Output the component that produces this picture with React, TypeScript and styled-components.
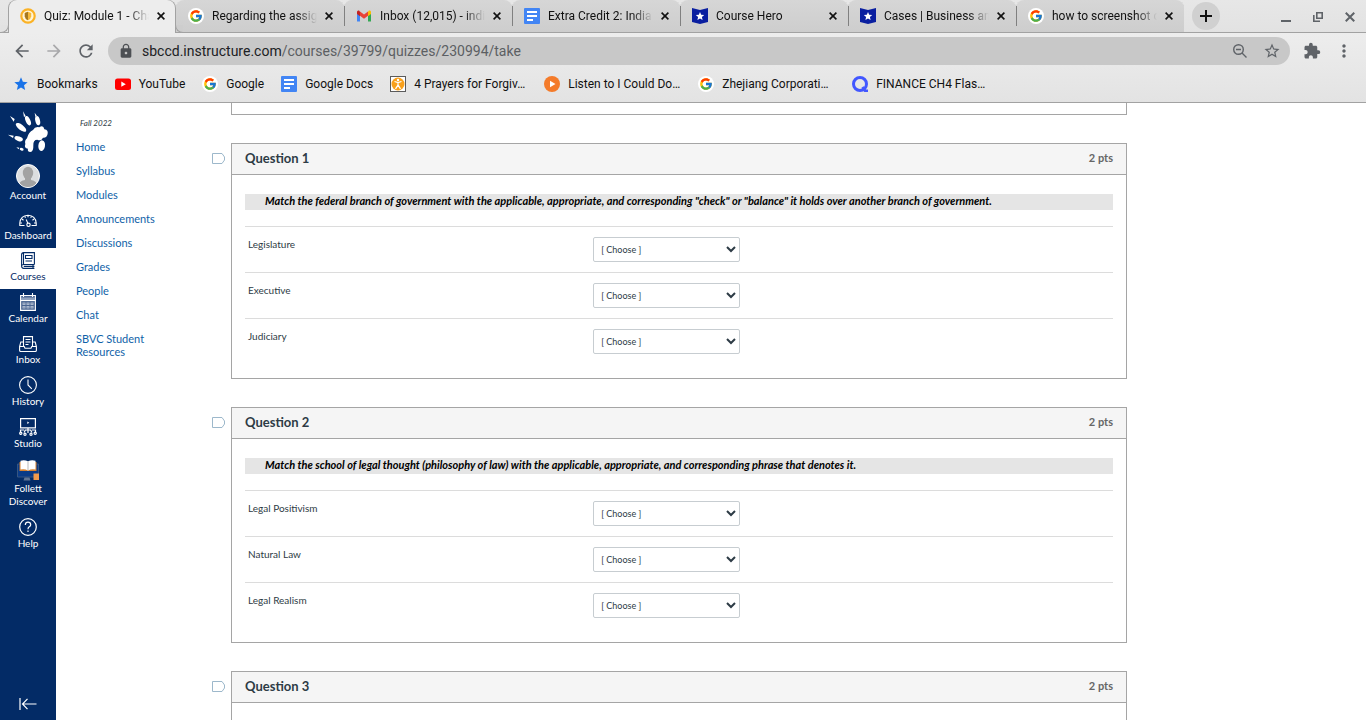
import React from 'react';
import styled, { createGlobalStyle, css } from 'styled-components';
import { FcGoogle } from 'react-icons/fc';
import {
  MdArrowBack,
  MdArrowForward,
  MdExtension,
  MdLock,
  MdMoreVert,
  MdRefresh,
  MdStar,
  MdStarBorder,
} from 'react-icons/md';

const line = '#a2a2a2';
const navy = '#032b66';

const GlobalStyle = createGlobalStyle`
  *, *::before, *::after { box-sizing: border-box; }
  body { margin: 0; background: #fff; }
  button { border: 0; padding: 0; background: none; font: inherit; color: inherit; cursor: pointer; }
  a { text-decoration: none; }
  svg { display: block; flex: none; }
`;

const Window = styled.div`
  display: flex;
  flex-direction: column;
  height: 100vh;
  overflow: hidden;
`;

/* ---------- browser frame ---------- */

const Chrome = styled.header`
  flex: none;
  font-family: Roboto, 'Noto Sans', sans-serif;
  font-size: 12px;
  color: #111;
  border-bottom: 1px solid ${line};
`;

const TabStrip = styled.div`
  display: flex;
  height: 33px;
  padding-left: 8px;
  background: linear-gradient(#e7e7e7, #e2e2e2);
  box-shadow: inset 0 -1px ${line};
`;

const flare = css`
  content: '';
  position: absolute;
  bottom: 0;
  width: 8px;
  height: 8px;
`;

const Tab = styled.div<{ $active?: boolean }>`
  position: relative;
  display: flex;
  align-items: center;
  flex: 0 1 168px;
  min-width: 0;
  padding: 0 7px 1px 12px;
  border-radius: 8px 8px 0 0;
  background: linear-gradient(#d6d6d6, #cdcdcd);
  box-shadow: inset 0 -1px ${line};

  & + &::before {
    content: '';
    position: absolute;
    left: 0;
    top: 6px;
    width: 1px;
    height: 20px;
    background: #808080;
  }

  &:last-of-type::after {
    ${flare}
    right: -8px;
    background: radial-gradient(circle at 8px 0, transparent 7px, #cdcdcd 8px);
    box-shadow: inset 0 -1px ${line};
  }

  ${(p) =>
    p.$active &&
    css`
      z-index: 1;
      background: #ededed;
      box-shadow: inset 1px 0 ${line}, inset -1px 0 ${line};

      &::before {
        ${flare}
        left: -7px;
        border: solid ${line};
        border-width: 0 1px 1px 0;
        border-radius: 0 0 8px 0;
        background: #e2e2e2;
      }

      &::after {
        ${flare}
        right: -7px;
        border: solid ${line};
        border-width: 0 0 1px 1px;
        border-radius: 0 0 0 8px;
        background: #cdcdcd;
      }

      & + div::before {
        display: none;
      }
    `}
`;

const TabTitle = styled.button`
  flex: 1;
  min-width: 0;
  margin-left: 8px;
  overflow: hidden;
  white-space: nowrap;
  text-align: left;
  line-height: 16px;
  mask-image: linear-gradient(to right, #000 80%, transparent);
`;

const CloseTab = styled.button`
  display: grid;
  place-items: center;
  width: 16px;
  height: 16px;
  margin-left: 4px;
`;

const NewTab = styled.button`
  display: grid;
  place-items: center;
  width: 28px;
  height: 28px;
  margin: 2px 0 0 8px;
  border-radius: 50%;
  background: #d0d0d0;
`;

const WindowControls = styled.div`
  display: flex;
  align-items: center;
  margin-left: auto;
`;

const WindowButton = styled.button`
  display: grid;
  place-items: center;
  width: 32px;
  height: 32px;
  color: #5f6368;
`;

const ChromeBody = styled.div`
  background: linear-gradient(#ededed, #e3e3e3);
`;

const Toolbar = styled.div`
  display: flex;
  align-items: center;
  padding: 4px 6px;
`;

const ToolButton = styled.button<{ $dim?: boolean }>`
  display: grid;
  place-items: center;
  width: 32px;
  height: 28px;
  color: ${(p) => (p.$dim ? '#a8a8aa' : '#5f6368')};
`;

const Omnibox = styled.div`
  display: flex;
  align-items: center;
  flex: 1;
  min-width: 0;
  height: 28px;
  margin: 0 6px;
  padding: 0 2px 0 10px;
  border-radius: 14px;
  background: #c8c8c8;
  color: #5f6368;
  font-size: 14px;
`;

const Host = styled.label`
  margin-left: 8px;
  color: #202124;
`;

const PathInput = styled.input`
  flex: 1;
  min-width: 0;
  padding: 0;
  border: 0;
  outline: 0;
  background: none;
  font: inherit;
  color: #5c5f63;
`;

const Bookmarks = styled.nav`
  display: flex;
  align-items: center;
  gap: 17px;
  height: 33px;
  padding: 0 13px 3px;
`;

const Bookmark = styled.a<{ $long: boolean }>`
  display: flex;
  align-items: center;
  gap: 8px;
  min-width: ${(p) => (p.$long ? '137px' : '0')};
  color: #111;
  white-space: nowrap;
  line-height: 16px;
`;

const Disc = styled.span`
  display: grid;
  place-items: center;
  flex: none;
  width: 16px;
  height: 16px;
  border-radius: 50%;
  background: #fff;
`;

/* ---------- page ---------- */

const Page = styled.div`
  display: flex;
  flex: 1;
  min-height: 0;
  font-family: Lato, 'Open Sans', sans-serif;
  color: #2d3b45;
`;

const GlobalNav = styled.nav`
  display: flex;
  flex-direction: column;
  flex: none;
  width: 56px;
  background: ${navy};
`;

const Logo = styled.a`
  display: grid;
  place-items: center;
  height: 57px;
`;

const NavItem = styled.a<{ $active?: boolean }>`
  display: flex;
  flex-direction: column;
  align-items: center;
  gap: 1px;
  padding: 4px 0 6px;
  font-size: 10px;
  line-height: 13px;
  text-align: center;
  color: ${(p) => (p.$active ? navy : '#fff')};
  background: ${(p) => (p.$active ? '#fff' : 'transparent')};
`;

const Collapse = styled.button`
  display: grid;
  place-items: center;
  height: 32px;
  margin-top: auto;
  color: #fff;
`;

const CourseNav = styled.nav`
  flex: none;
  width: 156px;
  padding: 14px 50px 0 20px;
`;

const Term = styled.p`
  margin: 0 0 11px;
  padding-left: 4px;
  font-size: 8px;
  line-height: 12px;
  font-style: italic;
`;

const CourseList = styled.ul`
  display: flex;
  flex-direction: column;
  gap: 11px;
  margin: 0;
  padding: 0;
  list-style: none;
`;

const CourseLink = styled.a`
  display: block;
  font-size: 11px;
  line-height: 13px;
  color: #0f62a8;
`;

const Quiz = styled.main`
  display: flex;
  flex-direction: column;
  gap: 28px;
  flex: 1;
  min-width: 0;
  padding-right: 239px;
  overflow: auto;
  scrollbar-width: none;
`;

const PreviousPanel = styled.section`
  flex: none;
  height: 12px;
  margin-left: 19px;
  border: 1px solid #a5a5a5;
  border-top: 0;
`;

const QuestionRow = styled.div`
  display: flex;
  align-items: flex-start;
  gap: 6px;
`;

const FlagButton = styled.button`
  margin-top: 10px;
`;

const Card = styled.section`
  flex: 1;
  min-width: 0;
  border: 1px solid #a5a5a5;
`;

const CardHeader = styled.header`
  display: flex;
  align-items: center;
  justify-content: space-between;
  height: 31px;
  padding: 0 13px 2px;
  border-bottom: 1px solid #a5a5a5;
  background: #f5f5f5;
`;

const CardTitle = styled.h2`
  margin: 0;
  font-size: 13px;
  line-height: 16px;
  font-weight: 700;
`;

const Points = styled.span`
  font-size: 11px;
  line-height: 16px;
  font-weight: 700;
  color: #666;
`;

const CardBody = styled.div`
  padding: 19px 13px 14px;
`;

const Prompt = styled.p`
  margin: 0 0 16px;
  padding: 0 20px 2px;
  font-size: 11px;
  line-height: 14px;
  font-weight: 700;
  font-style: italic;
  color: #000;
  background: #e5e5e5;
`;

const Answer = styled.div`
  display: flex;
  align-items: flex-start;
  gap: 1px;
  padding: 10px 0;
  border-top: 1px solid #dcdcdc;
`;

const AnswerLabel = styled.label`
  flex: 0 0 40%;
  padding-left: 3px;
  font-size: 10px;
  line-height: 14px;
`;

const AnswerSelect = styled.select`
  width: 147px;
  height: 25px;
  padding: 0 0 0 3px;
  border: 1px solid #c7cdd1;
  border-radius: 2px;
  background-color: #fff;
  font-family: inherit;
  font-size: 9px;
  color: #2d3b45;
`;

/* ---------- drawings ---------- */

const GoogleIcon = () => (
  <Disc>
    <FcGoogle size={14} />
  </Disc>
);

const DocsIcon = () => (
  <svg width="16" height="16" viewBox="0 0 16 16">
    <rect width="16" height="16" rx="1" fill="#4285f4" />
    <path d="M3 3h10v2H3zM3 7h10v2H3zM3 11h6v2H3z" fill="#fff" />
  </svg>
);

const GmailIcon = () => (
  <svg width="16" height="16" viewBox="0 0 16 16">
    <path d="M1 4v9.500h3V7z" fill="#4285f4" />
    <path d="M15 4v9.500h-3V7z" fill="#34a853" />
    <path d="M12 3.500 13 2.600Q15 2 15 4v2l-3 2.300z" fill="#fbbc04" />
    <path d="M4 3.500 3 2.600Q1 2 1 4v2l3 2.300z" fill="#c5221f" />
    <path d="M4 3.500v4.300l4 3 4-3V3.500l-4 3z" fill="#ea4335" />
  </svg>
);

const HeroIcon = () => (
  <svg width="16" height="16" viewBox="0 0 16 16">
    <path d="M0 0 8 2l8-2v14l-8 2-8-2z" fill="#0a1fa0" />
    <path d="m8 4 1.200 2.800 3 .2-2.300 2 .7 3L8 10.400 5.400 12l.7-3-2.300-2 3-.2z" fill="#fff" />
  </svg>
);

const QuizIcon = () => (
  <svg width="16" height="16" viewBox="0 0 16 16">
    <circle cx="8" cy="8" r="6.700" fill="#fff4d6" stroke="#fbb225" strokeWidth="2.200" />
    <path d="M8 3.800 11.200 5v3.200Q11 10.700 8 12.200 5 10.700 4.800 8.200V5z" fill="#f5b93a" />
    <path d="M8 3.800v8.400Q5 10.700 4.800 8.200V5z" fill="#a5781f" />
  </svg>
);

const YouTubeIcon = () => (
  <svg width="16" height="16" viewBox="0 0 16 16">
    <rect y="2.500" width="16" height="11.500" rx="2.500" fill="#f00" />
    <path d="m6.300 5.600 4.500 2.600-4.500 2.600z" fill="#fff" />
  </svg>
);

const PrayerIcon = () => (
  <svg width="16" height="16" viewBox="0 0 16 16">
    <rect x=".5" y=".5" width="15" height="15" fill="#fff" stroke="#5b5b5b" />
    <circle cx="8" cy="8" r="6.500" fill="#f9a01b" />
    <circle cx="8" cy="4" r="1.200" fill="#fff" />
    <path d="m4.500 5.500 3.500 1 3.500-1M8 6.500V9l-2.500 3.800M8 9l2.500 3.800" fill="none" stroke="#fff" strokeWidth="1.300" />
  </svg>
);

const PlayIcon = () => (
  <svg width="16" height="16" viewBox="0 0 16 16">
    <circle cx="8" cy="8" r="8" fill="#f47b2a" />
    <path d="m6 4.800 5.500 3.200L6 11.200z" fill="#fff" />
  </svg>
);

const QuizletIcon = () => (
  <svg width="16" height="16" viewBox="0 0 16 16" fill="none" stroke="#4257ff">
    <circle cx="8" cy="8" r="6.500" strokeWidth="3" />
    <path d="m10.500 11 2.500 3.800h3" strokeWidth="2.600" />
  </svg>
);

const CrossIcon = ({ size = 8, color = '#111' }: { size?: number; color?: string }) => (
  <svg width={size} height={size} viewBox="0 0 8 8" stroke={color} strokeWidth="1.600">
    <path d="m.6.600 6.800 6.800M7.400.600.600 7.400" />
  </svg>
);

const ZoomIcon = () => (
  <svg width="16" height="16" viewBox="0 0 16 16" fill="none" stroke="currentColor" strokeWidth="1.400">
    <circle cx="6.500" cy="6.500" r="4.800" />
    <path d="m10 10 4.500 4.500M4 6.500h5" />
  </svg>
);

const PawLogo = () => (
  <svg width="42" height="44" viewBox="20 30 126 132" fill="#fff">
    <ellipse cx="62" cy="82" rx="19" ry="8" transform="rotate(38 62 82)" />
    <path d="m29 48 14 9-3 8z" />
    <ellipse cx="83" cy="62" rx="15" ry="7" transform="rotate(66 83 62)" />
    <path d="m68 34 8 14-5 3z" />
    <ellipse cx="112" cy="62" rx="14" ry="7" transform="rotate(76 112 62)" />
    <path d="m103 38 7 10-5 3z" />
    <ellipse cx="55" cy="116" rx="13" ry="7" transform="rotate(18 55 116)" />
    <path d="m23 104 17 3-2 7z" />
    <ellipse cx="64" cy="148" rx="6" ry="4" transform="rotate(20 64 148)" />
    <path d="m48 142 9 1-2 5z" />
    <ellipse cx="124" cy="137" rx="10" ry="16" transform="rotate(8 124 137)" />
    <path d="M80 115Q85 95 98 90q6-11 19-8 12-8 15 6 14 2 9 17-3 10-13 8-6 12-17 6-13 0-12 17 1 19-9 20-10-1-7-10-13-1-8-14-3-10 5-17z" />
  </svg>
);

const AvatarIcon = () => (
  <svg width="24" height="24" viewBox="0 0 24 24">
    <clipPath id="avatar-clip">
      <circle cx="12" cy="12" r="11" />
    </clipPath>
    <circle cx="12" cy="12" r="11.500" fill="#dcdee0" stroke="#fff" />
    <g clipPath="url(#avatar-clip)" fill="#a3a3a3">
      <ellipse cx="12" cy="9" rx="5.200" ry="6.300" />
      <path d="M9 13h6v3q7 1 7 8H2q0-7 7-8z" />
    </g>
  </svg>
);

const DashboardIcon = () => (
  <svg width="18" height="16" viewBox="0 1 18 16" fill="none" stroke="#fff" strokeWidth="1.100">
    <path d="M5.500 14.500H.800V12Q1.500 4.500 9 4.200q7.500.300 8.200 7.800v2.500h-4.700" />
    <circle cx="9.500" cy="13.800" r="1.700" />
    <path d="m7.200 8.500 1.600 3.700M3 8l1.500 1.200M1 12h2M5.800 5.200l.7 1.500M9 4.200v2M12.500 5.200l-.8 1.500M15 8l-1.500 1.200M17 12h-2" />
  </svg>
);

const CoursesIcon = () => (
  <svg width="14" height="17" viewBox="0 0 14 17" fill="none" stroke={navy} strokeWidth="1.100">
    <path d="M13.400 12.500V.600H2.600Q.6.600.6 2.800v11q0 2.600 2 2.600h10.800M13.400 12.500H2.600q-2 0-2 2M13.400 14.400H2.800M12 12.500v3.900M2.500.6v11.900" />
    <path d="M4.500 3.500h6.500v3H4.500zM4.500 9h6.500" />
  </svg>
);

const CalendarIcon = () => (
  <svg width="16" height="18" viewBox="0 0 16 18" fill="none" stroke="#fff" strokeWidth="1.100">
    <path d="M1 3h14v14H1z" fill="#4a6591" stroke="none" />
    <path d="M.6 2.500h14.800v14.900H.600zM3.500 0v4M12.500 0v4" />
    <path d="M1 4.500h14v3H1z" fill="#8fa1bd" stroke="none" />
    <path d="M.6 7.500h14.800" />
    <path d="M3 10h2v1.500H3zM7 10h2v1.500H7zM11 10h2v1.500h-2zM3 13.500h2V15H3zM7 13.500h2V15H7zM11 13.500h2V15h-2z" stroke="#a9b7cc" />
  </svg>
);

const InboxIcon = () => (
  <svg width="18" height="17" viewBox="0 0 18 17" fill="none" stroke="#fff" strokeWidth="1.100">
    <path d="M4.500 11.500V1.600h9v9.900M4.500 7H1.800L.6 11.500v3.800q0 1.200 1.200 1.200h14.400q1.200 0 1.200-1.200v-3.800L16.200 7h-2.700M.6 11.500h4.600l.8 1.800h6l.8-1.800h4.600" />
    <path d="M6.500 4.500h5M6.500 7h5M6.500 9.500h3" />
  </svg>
);

const HistoryIcon = () => (
  <svg width="18" height="18" viewBox="0 0 18 18" fill="none" stroke="#fff" strokeWidth="1.100">
    <circle cx="9" cy="9" r="8.400" />
    <path d="M9 3.500V9l3.800 3.800" />
  </svg>
);

const StudioIcon = () => (
  <svg width="18" height="18" viewBox="0 0 18 18" fill="none" stroke="#fff" strokeWidth="1.200">
    <path d="M1.600.6h14.800v9.300H1.600zM9 10v5M1.500 14.500V12h3.800M16.500 14.500V12h-3.800M5 14.500 6.500 12h5l1.500 2.500" />
    <path d="m8.300 3.600 2 1.200-2 1.200z" fill="#fff" stroke="none" />
    <circle cx="1.800" cy="15.200" r="1.100" />
    <circle cx="6" cy="16.200" r="1.100" />
    <circle cx="12" cy="16.200" r="1.100" />
    <circle cx="16.200" cy="15.200" r="1.100" />
  </svg>
);

const FollettIcon = () => (
  <svg width="22" height="21" viewBox="0 0 22 21">
    <path d="M.5 4h21v13H.500z" fill="#0a3b87" stroke="#365581" />
    <path d="M2.500 2h17v9h-17z" fill="#d5812f" />
    <path d="M3.500.800Q7-.6 11 1.200 15-.6 18.500.800V9.500q-4-1-7.500 1-3.500-2-7.500-1z" fill="#fff" />
    <path d="M11 1.200v9.300" stroke="#b9b9b9" />
    <path d="M7.500 17.500h5l1 3h-7z" fill="#5f7494" />
    <path d="M16.500 13.500H22V20h-5.500z" fill="#f09a4c" />
  </svg>
);

const HelpIcon = () => (
  <svg width="18" height="18" viewBox="0 0 18 18" fill="none" stroke="#fff" strokeWidth="1.200">
    <circle cx="9" cy="9" r="8.300" />
    <path d="M6.300 7q.1-2.800 2.700-2.800T11.700 6.800Q11.700 8 10.300 8.800T9 11.200" />
    <path d="M9 12.500V14" />
  </svg>
);

const CollapseIcon = () => (
  <svg width="18" height="12" viewBox="0 0 18 12" fill="none" stroke="currentColor" strokeWidth="1.200">
    <path d="M1 0v12M17.500 6H4M8.500.800 3.500 6l5 5.200" />
  </svg>
);

const FlagIcon = () => (
  <svg width="13" height="11" viewBox="0 0 13 11" fill="#fff" stroke="#9db8cb">
    <path d="M.5.500h9.500l2.500 3.500v3L10 10.500H.500z" />
  </svg>
);

/* ---------- data ---------- */

const tabs = [
  { title: 'Quiz: Module 1 - Cha', icon: <QuizIcon />, active: true },
  { title: 'Regarding the assign', icon: <GoogleIcon /> },
  { title: 'Inbox (12,015) - indi', icon: <GmailIcon /> },
  { title: 'Extra Credit 2: India', icon: <DocsIcon /> },
  { title: 'Course Hero', icon: <HeroIcon /> },
  { title: 'Cases | Business and', icon: <HeroIcon /> },
  { title: 'how to screenshot o', icon: <GoogleIcon /> },
];

const bookmarks = [
  { title: 'Bookmarks', icon: <MdStar size={16} color="#1a73e8" /> },
  { title: 'YouTube', icon: <YouTubeIcon /> },
  { title: 'Google', icon: <GoogleIcon /> },
  { title: 'Google Docs', icon: <DocsIcon /> },
  { title: '4 Prayers for Forgiv…', icon: <PrayerIcon /> },
  { title: 'Listen to I Could Do…', icon: <PlayIcon /> },
  { title: 'Zhejiang Corporati…', icon: <GoogleIcon /> },
  { title: 'FINANCE CH4 Flas…', icon: <QuizletIcon /> },
];

const navItems = [
  { title: 'Account', icon: <AvatarIcon /> },
  { title: 'Dashboard', icon: <DashboardIcon /> },
  { title: 'Courses', icon: <CoursesIcon />, active: true },
  { title: 'Calendar', icon: <CalendarIcon /> },
  { title: 'Inbox', icon: <InboxIcon /> },
  { title: 'History', icon: <HistoryIcon /> },
  { title: 'Studio', icon: <StudioIcon /> },
  { title: 'Follett Discover', icon: <FollettIcon /> },
  { title: 'Help', icon: <HelpIcon /> },
];

const courseLinks = [
  'Home',
  'Syllabus',
  'Modules',
  'Announcements',
  'Discussions',
  'Grades',
  'People',
  'Chat',
  'SBVC Student Resources',
];

const questions = [
  {
    prompt:
      'Match the federal branch of government with the applicable, appropriate, and corresponding "check" or "balance" it holds over another branch of government.',
    answers: ['Legislature', 'Executive', 'Judiciary'],
  },
  {
    prompt:
      'Match the school of legal thought (philosophy of law) with the applicable, appropriate, and corresponding phrase that denotes it.',
    answers: ['Legal Positivism', 'Natural Law', 'Legal Realism'],
  },
  { prompt: '', answers: [] },
];

export default function App() {
  return (
    <Window>
      <GlobalStyle />
      <Chrome>
        <TabStrip>
          {tabs.map((tab) => (
            <Tab key={tab.title} $active={tab.active}>
              {tab.icon}
              <TabTitle>{tab.title}</TabTitle>
              <CloseTab aria-label="Close tab">
                <CrossIcon />
              </CloseTab>
            </Tab>
          ))}
          <NewTab aria-label="New tab">
            <svg width="12" height="12" viewBox="0 0 12 12" stroke="#111" strokeWidth="2">
              <path d="M6 0v12M0 6h12" />
            </svg>
          </NewTab>
          <WindowControls>
            <WindowButton aria-label="Minimize">
              <svg width="10" height="10" viewBox="0 0 10 10" fill="currentColor">
                <path d="M0 8h10v2H0z" />
              </svg>
            </WindowButton>
            <WindowButton aria-label="Restore">
              <svg width="10" height="10" viewBox="0 0 10 10" fill="none" stroke="currentColor" strokeWidth="1.600">
                <path d="M3.800.800h5.400v5.400H3.800zM.8 3v6.200H7" />
              </svg>
            </WindowButton>
            <WindowButton aria-label="Close window">
              <CrossIcon size={10} color="#5f6368" />
            </WindowButton>
          </WindowControls>
        </TabStrip>
        <ChromeBody>
          <Toolbar>
            <ToolButton aria-label="Back">
              <MdArrowBack size={20} />
            </ToolButton>
            <ToolButton aria-label="Forward" $dim>
              <MdArrowForward size={20} />
            </ToolButton>
            <ToolButton aria-label="Reload">
              <MdRefresh size={20} />
            </ToolButton>
            <Omnibox>
              <MdLock size={16} color="#4d5054" />
              <Host htmlFor="address">sbccd.instructure.com</Host>
              <PathInput id="address" defaultValue="/courses/39799/quizzes/230994/take" />
              <ToolButton aria-label="Zoom">
                <ZoomIcon />
              </ToolButton>
              <ToolButton aria-label="Bookmark this page">
                <MdStarBorder size={18} />
              </ToolButton>
            </Omnibox>
            <ToolButton aria-label="Extensions">
              <MdExtension size={18} />
            </ToolButton>
            <ToolButton aria-label="Menu">
              <MdMoreVert size={20} />
            </ToolButton>
          </Toolbar>
          <Bookmarks>
            {bookmarks.map((b) => (
              <Bookmark key={b.title} href="#" $long={b.title.endsWith('…')}>
                {b.icon}
                {b.title}
              </Bookmark>
            ))}
          </Bookmarks>
        </ChromeBody>
      </Chrome>

      <Page>
        <GlobalNav>
          <Logo href="#" aria-label="Home">
            <PawLogo />
          </Logo>
          {navItems.map((item) => (
            <NavItem key={item.title} href="#" $active={item.active}>
              {item.icon}
              {item.title}
            </NavItem>
          ))}
          <Collapse aria-label="Minimize navigation">
            <CollapseIcon />
          </Collapse>
        </GlobalNav>

        <CourseNav>
          <Term>Fall 2022</Term>
          <CourseList>
            {courseLinks.map((link) => (
              <li key={link}>
                <CourseLink href="#">{link}</CourseLink>
              </li>
            ))}
          </CourseList>
        </CourseNav>

        <Quiz>
          <PreviousPanel />
          {questions.map((q, i) => (
            <QuestionRow key={i}>
              <FlagButton aria-label={`Flag question ${i + 1}`}>
                <FlagIcon />
              </FlagButton>
              <Card>
                <CardHeader>
                  <CardTitle>Question {i + 1}</CardTitle>
                  <Points>2 pts</Points>
                </CardHeader>
                <CardBody>
                  {q.prompt && <Prompt>{q.prompt}</Prompt>}
                  {q.answers.map((answer, j) => (
                    <Answer key={answer}>
                      <AnswerLabel htmlFor={`answer-${i}-${j}`}>{answer}</AnswerLabel>
                      <AnswerSelect id={`answer-${i}-${j}`}>
                        <option>[ Choose ]</option>
                      </AnswerSelect>
                    </Answer>
                  ))}
                </CardBody>
              </Card>
            </QuestionRow>
          ))}
        </Quiz>
      </Page>
    </Window>
  );
}
